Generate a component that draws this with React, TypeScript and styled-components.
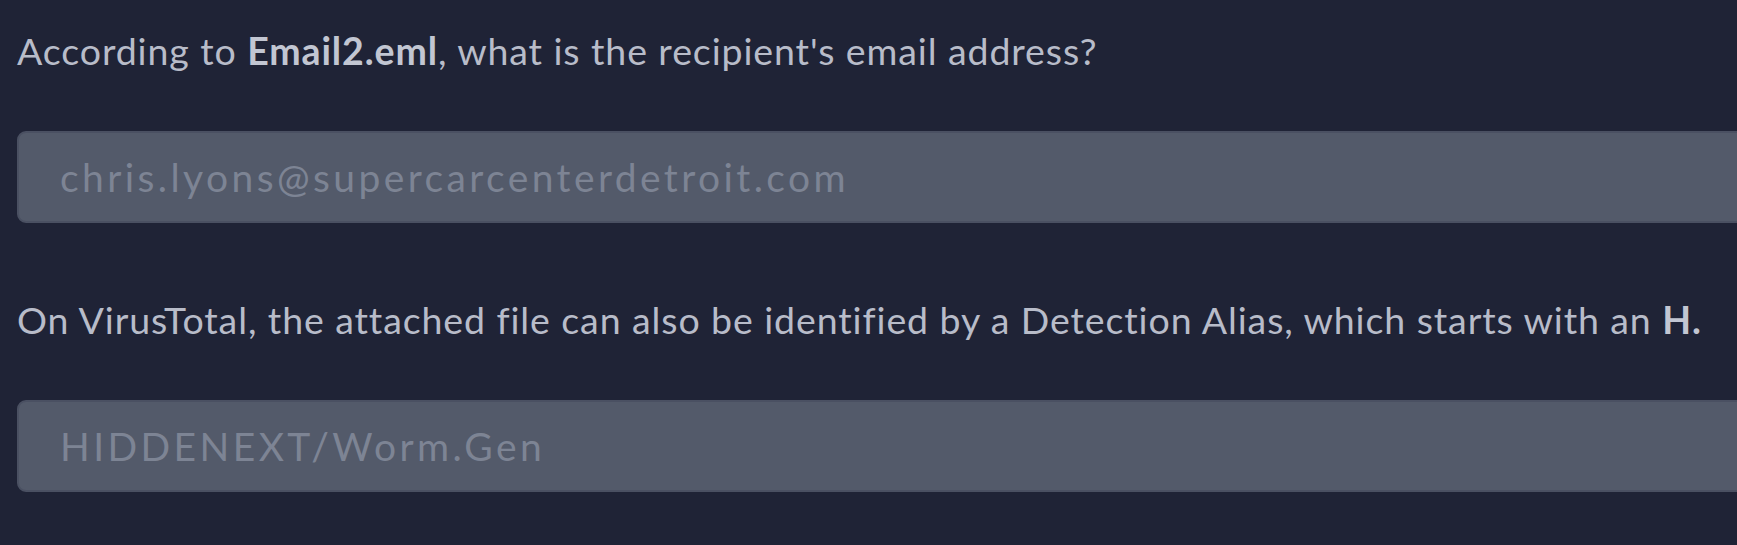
import React from 'react';
import styled, { createGlobalStyle } from 'styled-components';

const GlobalStyle = createGlobalStyle`
  html, body {
    margin: 0;
    padding: 0;
    background: #1f2336;
  }
  body {
    font-family: Lato, "Noto Sans", sans-serif;
  }
`;

type Question = {
  id: number;
  prompt: React.ReactNode;
  answer: string;
};

const questions: Question[] = [
  {
    id: 1,
    prompt: (
      <>
        According to <strong>Email2.eml</strong>, what is the recipient's email address?
      </>
    ),
    answer: 'chris.lyons@supercarcenterdetroit.com',
  },
  {
    id: 2,
    prompt: (
      <>
        On VirusTotal, the attached file can also be identified by a Detection Alias, which starts
        with an <strong>H.</strong>
      </>
    ),
    answer: 'HIDDENEXT/Worm.Gen',
  },
];

export default function App() {
  return (
    <>
      <GlobalStyle />
      <Page>
        {questions.map((q) => (
          <QuestionBlock key={q.id}>
            <Prompt>{q.prompt}</Prompt>
            <AnswerField readOnly value={q.answer} />
          </QuestionBlock>
        ))}
      </Page>
    </>
  );
}

const Page = styled.div`
  width: 1737px;
  height: 545px;
  overflow: hidden;
  box-sizing: border-box;
  padding: 28px 0 0 17px;
  display: flex;
  flex-direction: column;
  gap: 74px;
`;

const QuestionBlock = styled.div`
  display: flex;
  flex-direction: column;
  gap: 58px;
`;

const Prompt = styled.p`
  margin: 0;
  font-size: 37.5px;
  line-height: 45px;
  letter-spacing: 0.9px;
  color: #b8bcc9;
  white-space: nowrap;

  & strong {
    font-weight: 700;
    color: #c2c6d2;
  }
`;

const AnswerField = styled.input`
  width: 1760px;
  height: 92px;
  box-sizing: border-box;
  margin: 0;
  padding: 0 0 0 41px;
  border: 2px solid #4a5062;
  border-radius: 9px;
  background: #535a6a;
  color: #7d8494;
  font-family: Lato, "Noto Sans", sans-serif;
  font-size: 39px;
  letter-spacing: 3.4px;
  outline: none;
`;
